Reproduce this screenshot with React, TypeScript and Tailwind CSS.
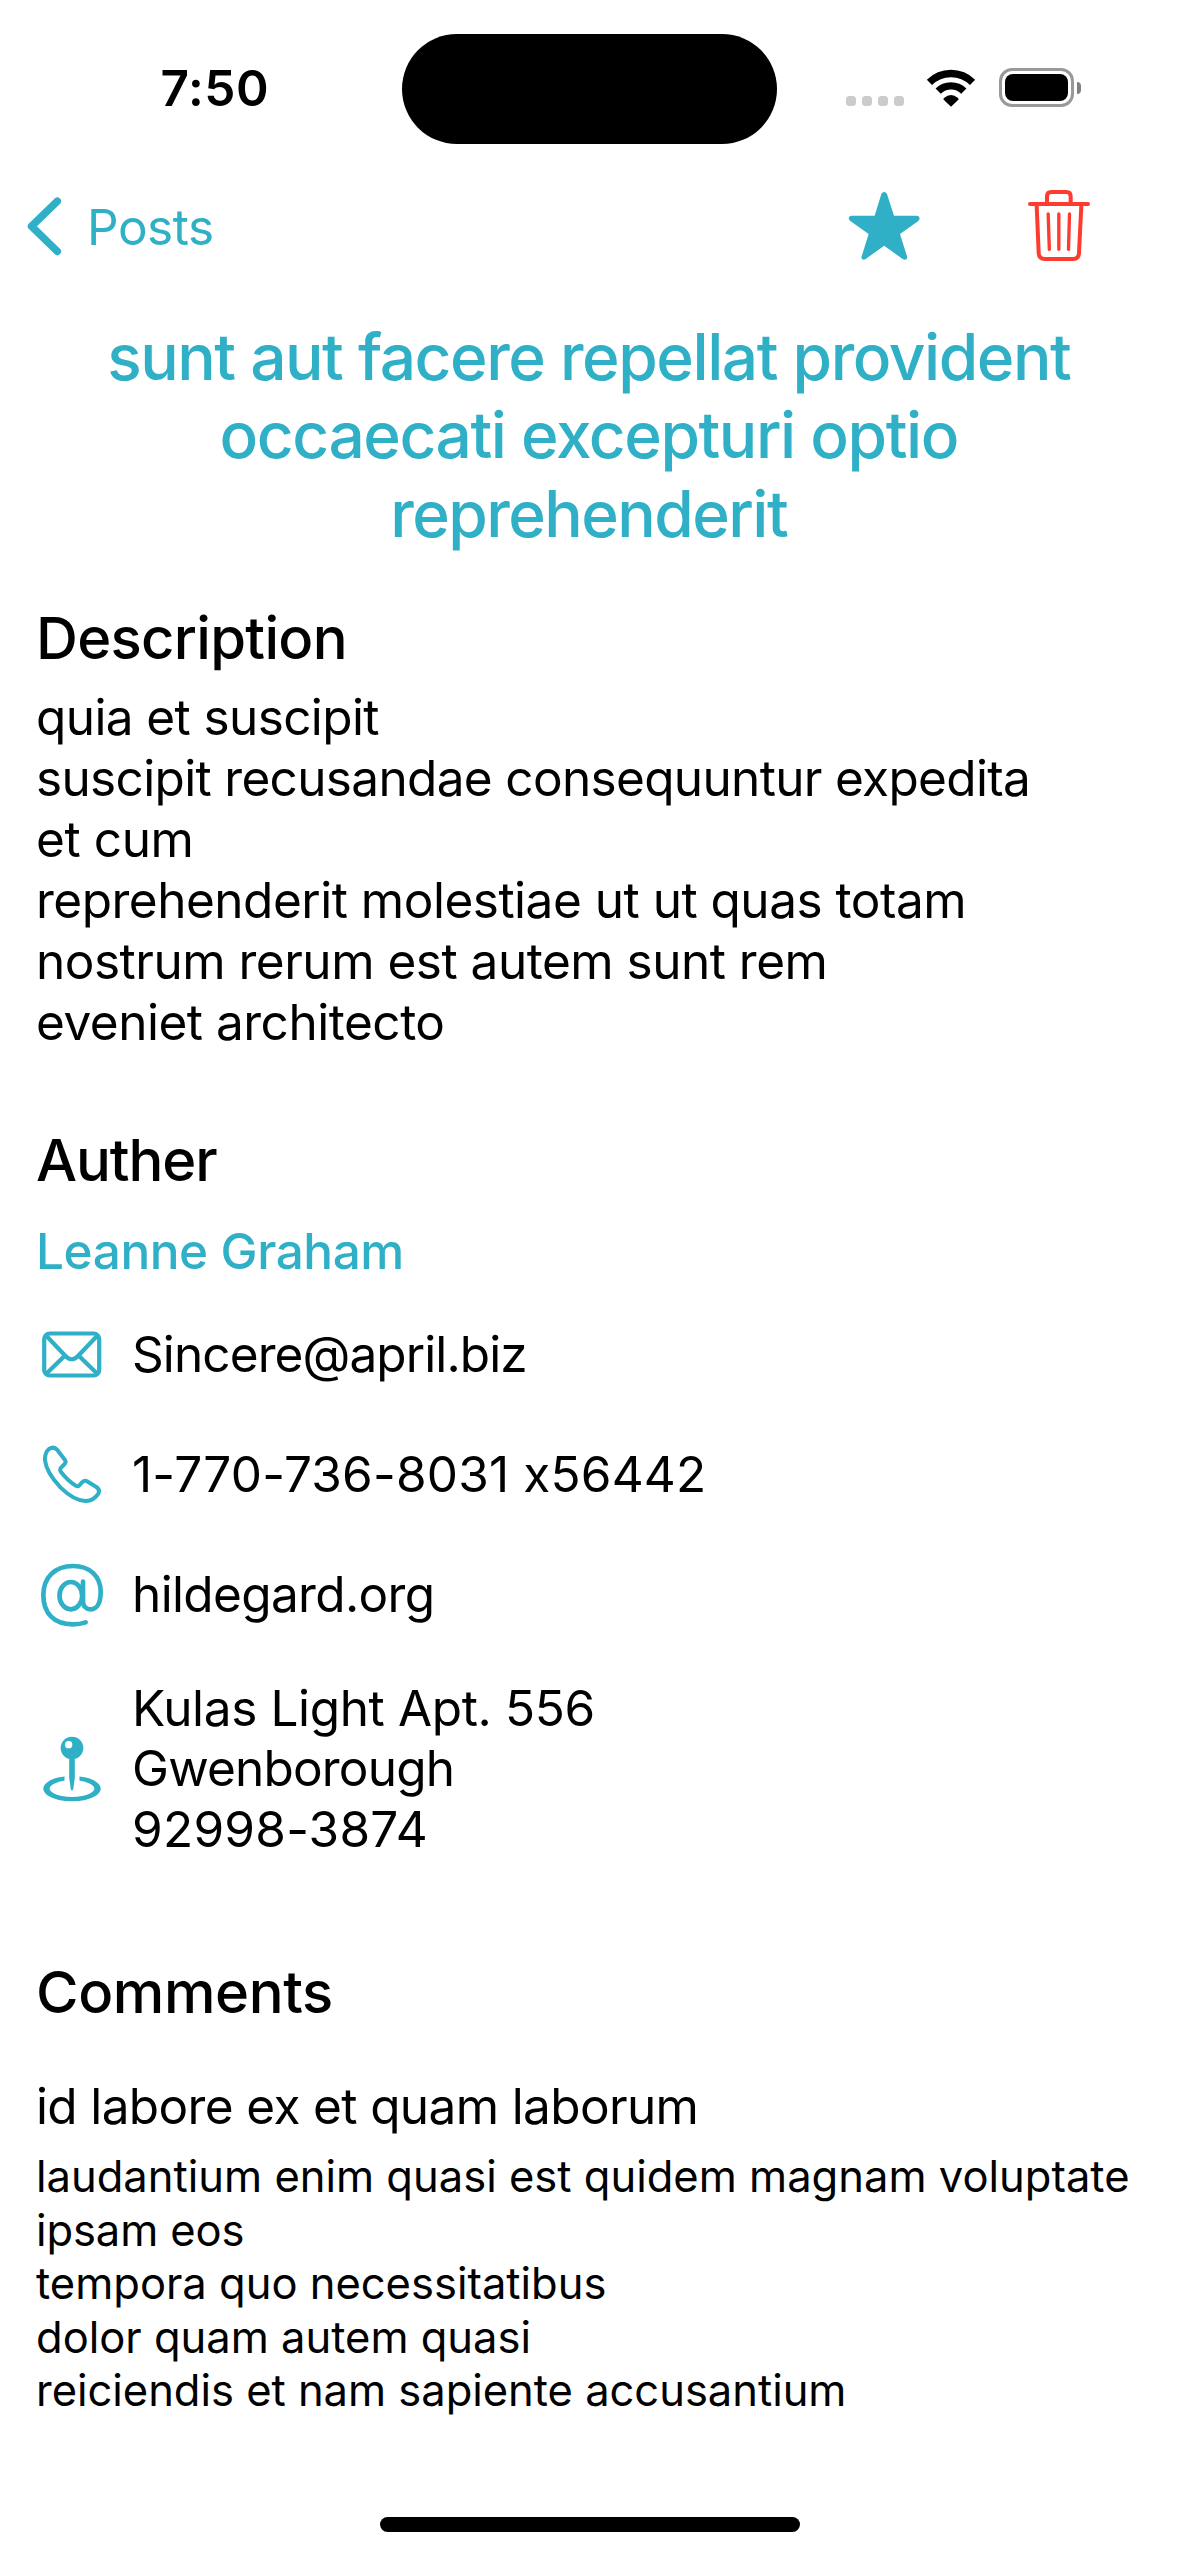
import type { ReactNode } from "react";

type Line = { text: string; tracking: string };

const titleLines: Line[] = [
  { text: "sunt aut facere repellat provident", tracking: "tracking-[-1.46px]" },
  { text: "occaecati excepturi optio", tracking: "tracking-[-1.44px]" },
  { text: "reprehenderit", tracking: "tracking-[-1.55px]" },
];

const descriptionLines: Line[] = [
  { text: "quia et suscipit", tracking: "tracking-[-0.6px]" },
  { text: "suscipit recusandae consequuntur expedita", tracking: "tracking-[-0.66px]" },
  { text: "et cum", tracking: "tracking-[-0.4px]" },
  { text: "reprehenderit molestiae ut ut quas totam", tracking: "tracking-[-0.49px]" },
  { text: "nostrum rerum est autem sunt rem", tracking: "tracking-[-0.49px]" },
  { text: "eveniet architecto", tracking: "tracking-[-0.48px]" },
];

const addressLines: Line[] = [
  { text: "Kulas Light Apt. 556", tracking: "tracking-[-0.37px]" },
  { text: "Gwenborough", tracking: "tracking-[-0.8px]" },
  { text: "92998-3874", tracking: "tracking-[0.25px]" },
];

const commentLines: Line[] = [
  { text: "laudantium enim quasi est quidem magnam voluptate", tracking: "tracking-[0.01px]" },
  { text: "ipsam eos", tracking: "tracking-[-0.1px]" },
  { text: "tempora quo necessitatibus", tracking: "tracking-normal" },
  { text: "dolor quam autem quasi", tracking: "tracking-normal" },
  { text: "reiciendis et nam sapiente accusantium", tracking: "tracking-[-0.02px]" },
];

function Lines({ lines }: { lines: Line[] }) {
  return (
    <>
      {lines.map((line) => (
        <span key={line.text} className={`block whitespace-nowrap ${line.tracking}`}>
          {line.text}
        </span>
      ))}
    </>
  );
}

function WifiIcon() {
  return (
    <svg className="h-[38px] w-[52px]" viewBox="436 145 156 114" fill="none">
      <path d="M449.3 185.3A91.5 91.5 0 0 1 578.7 185.3" stroke="#000" strokeWidth="22" />
      <path d="M475.5 211.5A54.5 54.5 0 0 1 552.5 211.5" stroke="#000" strokeWidth="22" />
      <path d="M514 258L492 237Q490 235 493 232Q514 214 535 232Q538 235 536 237Z" fill="#000" />
    </svg>
  );
}

function StarIcon() {
  return (
    <svg className="h-[72px] w-[72px]" viewBox="205 510 216 216" fill="#30B0C7">
      <path d="M285 587L305 522Q308 516 313.500 516Q319 516 322 522L343 587H412Q419 588 420 595Q420 600 415 604L361 642L382 709Q384 715 380 718Q375 721 369 717L313.500 677L258 717Q252 721 248 718Q244 715 246 709L267 642L213 604Q207 600 207 595Q208 588 215 587Z" />
    </svg>
  );
}

function TrashIcon() {
  return (
    <svg className="h-[72px] w-[64px]" viewBox="741 510 192 216" fill="none" stroke="#FF3B30" strokeWidth="12" strokeLinecap="round">
      <path d="M750 552H924" />
      <path d="M801 550V529Q801 516 814 516H859Q872 516 872 529V550" />
      <path d="M770 556L776 699Q777 717 794 717H880Q896 717 897 699L904 556" />
      <path d="M804.500 582L808 688M836.500 582V688M868.500 582L865.500 688" strokeWidth="10" />
    </svg>
  );
}

function MailIcon() {
  return (
    <svg className="h-[48px] w-[61px]" viewBox="42 1329.500 61 48" fill="none" stroke="#30B0C7" strokeWidth="4.200">
      <rect x="44.200" y="1333" width="55" height="42" rx="5.500" />
      <path d="M46 1335L65.500 1355.500Q71.700 1362 78 1355.500L97.500 1335" />
      <path d="M46 1373.500L64.500 1355.500M97.500 1373.500L79 1355.500" />
    </svg>
  );
}

function PhoneIcon() {
  return (
    <svg className="h-[60px] w-[60px]" viewBox="126 131 180 180" fill="none" stroke="#30B0C7" strokeWidth="12" strokeLinejoin="round">
      <path d="M147 146Q161 136 172 149L195 179Q199 185 194 191L183 202Q178 208 183 215Q203 241 227 256Q233 260 238 255L247 245Q254 239 261 243L289 260Q301 268 295 280Q280 303 256 302Q222 301 182 262Q139 217 135 180Q134 157 147 146Z" />
    </svg>
  );
}

function AtIcon() {
  return (
    <svg className="h-[64px] w-[64px]" viewBox="120 487 192 192" overflow="visible" fill="none" stroke="#30B0C7" strokeWidth="14" strokeLinecap="round">
      <ellipse cx="212.500" cy="588" rx="34" ry="41" />
      <path d="M249 546V603C249 620 259 629 272 629C292 629 302 608 302 576C302 530 270 499 219 499C165 499 130 533 130 586C130 642 163 674 218 674C234 674 246 672 257 668" />
    </svg>
  );
}

function PinIcon() {
  return (
    <svg className="h-[66px] w-[58px]" viewBox="130.500 1006 174 198" fill="#30B0C7">
      <path fillRule="evenodd" d="M217.500 1008A34 34 0 0 1 217.500 1076A34 34 0 0 1 217.500 1008ZM207.500 1021A11 11 0 0 0 207.500 1043A11 11 0 0 0 207.500 1021Z" />
      <path d="M209 1072H226V1130L221.500 1164Q217.500 1176 213.500 1164L209 1130Z" />
      <path d="M195 1127.300A86 38 0 1 0 240 1127.300V1140.400A67 25 0 1 1 195 1140.400Z" />
    </svg>
  );
}

function StatusBar() {
  return (
    <div className="flex h-[144px] items-start">
      <div className="w-[401.5px] pt-[58px] pl-[160.500px] text-[49.5px] leading-[61px] font-semibold tracking-[0.6px]">7:50</div>
      <div className="mt-[34px] h-[110px] w-[375.5px] rounded-full bg-black" />
      <div className="mt-[68px] ml-[69px] flex h-[39px] items-end">
        <div className="mb-px flex gap-[6px]">
          {[0, 1, 2, 3].map((dot) => (
            <div key={dot} className="size-[10px] rounded-[3.5px] bg-[#cccccc]" />
          ))}
        </div>
        <div className="ml-[21px] w-[52px]">
          <WifiIcon />
        </div>
        <div className="ml-[22px] h-[39px] w-[75px] rounded-[13px] border-3 border-[#999999] p-[3px]">
          <div className="h-full rounded-[8px] bg-black" />
        </div>
        <div className="mb-[13px] ml-[3px] h-[12px] w-[4px] rounded-r-full bg-[#808080]" />
      </div>
    </div>
  );
}

function NavBar() {
  return (
    <nav className="flex h-[164px] items-center text-[#30B0C7]">
      <svg className="ml-[27px] h-[60px] w-[36px]" viewBox="27 196.500 36 60" fill="none" stroke="#30B0C7" strokeWidth="7.500" strokeLinecap="round" strokeLinejoin="round">
        <path d="M57.300 201.700L31.500 226.800L57.300 251.900" />
      </svg>
      <span className="ml-[24px] pt-[2px] text-[49.5px] leading-[61px] tracking-[-0.47px]">Posts</span>
      <div className="mr-[88px] ml-auto flex items-center gap-[107px]">
        <StarIcon />
        <TrashIcon />
      </div>
    </nav>
  );
}

function ContactRow({ icon, children }: { icon: ReactNode; children: ReactNode }) {
  return (
    <div className="flex h-[120px] items-center">
      <div className="flex w-[96px] justify-center pr-[24px]">{icon}</div>
      {children}
    </div>
  );
}

function Heading({ children, className }: { children: ReactNode; className: string }) {
  return <h2 className={`text-[58px] leading-[72px] font-medium ${className}`}>{children}</h2>;
}

export default function App() {
  return (
    <div className="flex h-[2556px] w-[1179px] flex-col overflow-hidden bg-white font-[Inter,sans-serif] text-black [font-feature-settings:'calt'_0]">
      <StatusBar />
      <NavBar />
      <main className="flex flex-col px-[36px] pt-[9.500px] text-[49.5px] leading-[60.860px]">
        <h1 className="pr-[1.500px] text-center text-[64px] leading-[78.600px] font-medium text-[#30B0C7]">
          <Lines lines={titleLines} />
        </h1>

        <Heading className="mt-[48.500px] tracking-[-0.7px]">Description</Heading>
        <p className="mt-[13.500px]">
          <Lines lines={descriptionLines} />
        </p>

        <Heading className="mt-[72px] tracking-[-1.1px]">Auther</Heading>
        <p className="mt-[24.500px] font-medium tracking-[-0.42px] text-[#30B0C7]">Leanne Graham</p>
        <div className="mt-[12.500px]">
          <ContactRow icon={<MailIcon />}>
            <span className="tracking-[-0.9px]">Sincere@april.biz</span>
          </ContactRow>
          <ContactRow icon={<PhoneIcon />}>
            <span className="tracking-[0.18px]">1-770-736-8031 x56442</span>
          </ContactRow>
          <ContactRow icon={<AtIcon />}>
            <span className="tracking-[-0.64px]">hildegard.org</span>
          </ContactRow>
          <div className="flex h-[229px] items-center">
            <div className="flex w-[96px] justify-center pr-[24px]">
              <PinIcon />
            </div>
            <p>
              <Lines lines={addressLines} />
            </p>
          </div>
        </div>

        <Heading className="mt-[73px] tracking-[-0.4px]">Comments</Heading>
        <h3 className="mt-[48px] tracking-[-0.63px]">id labore ex et quam laborum</h3>
        <p className="mt-[13px] text-[43.5px] leading-[53.500px]">
          <Lines lines={commentLines} />
        </p>
      </main>
      <div className="mt-auto mb-[24px] h-[15px] w-[420px] self-center rounded-full bg-black" />
    </div>
  );
}
